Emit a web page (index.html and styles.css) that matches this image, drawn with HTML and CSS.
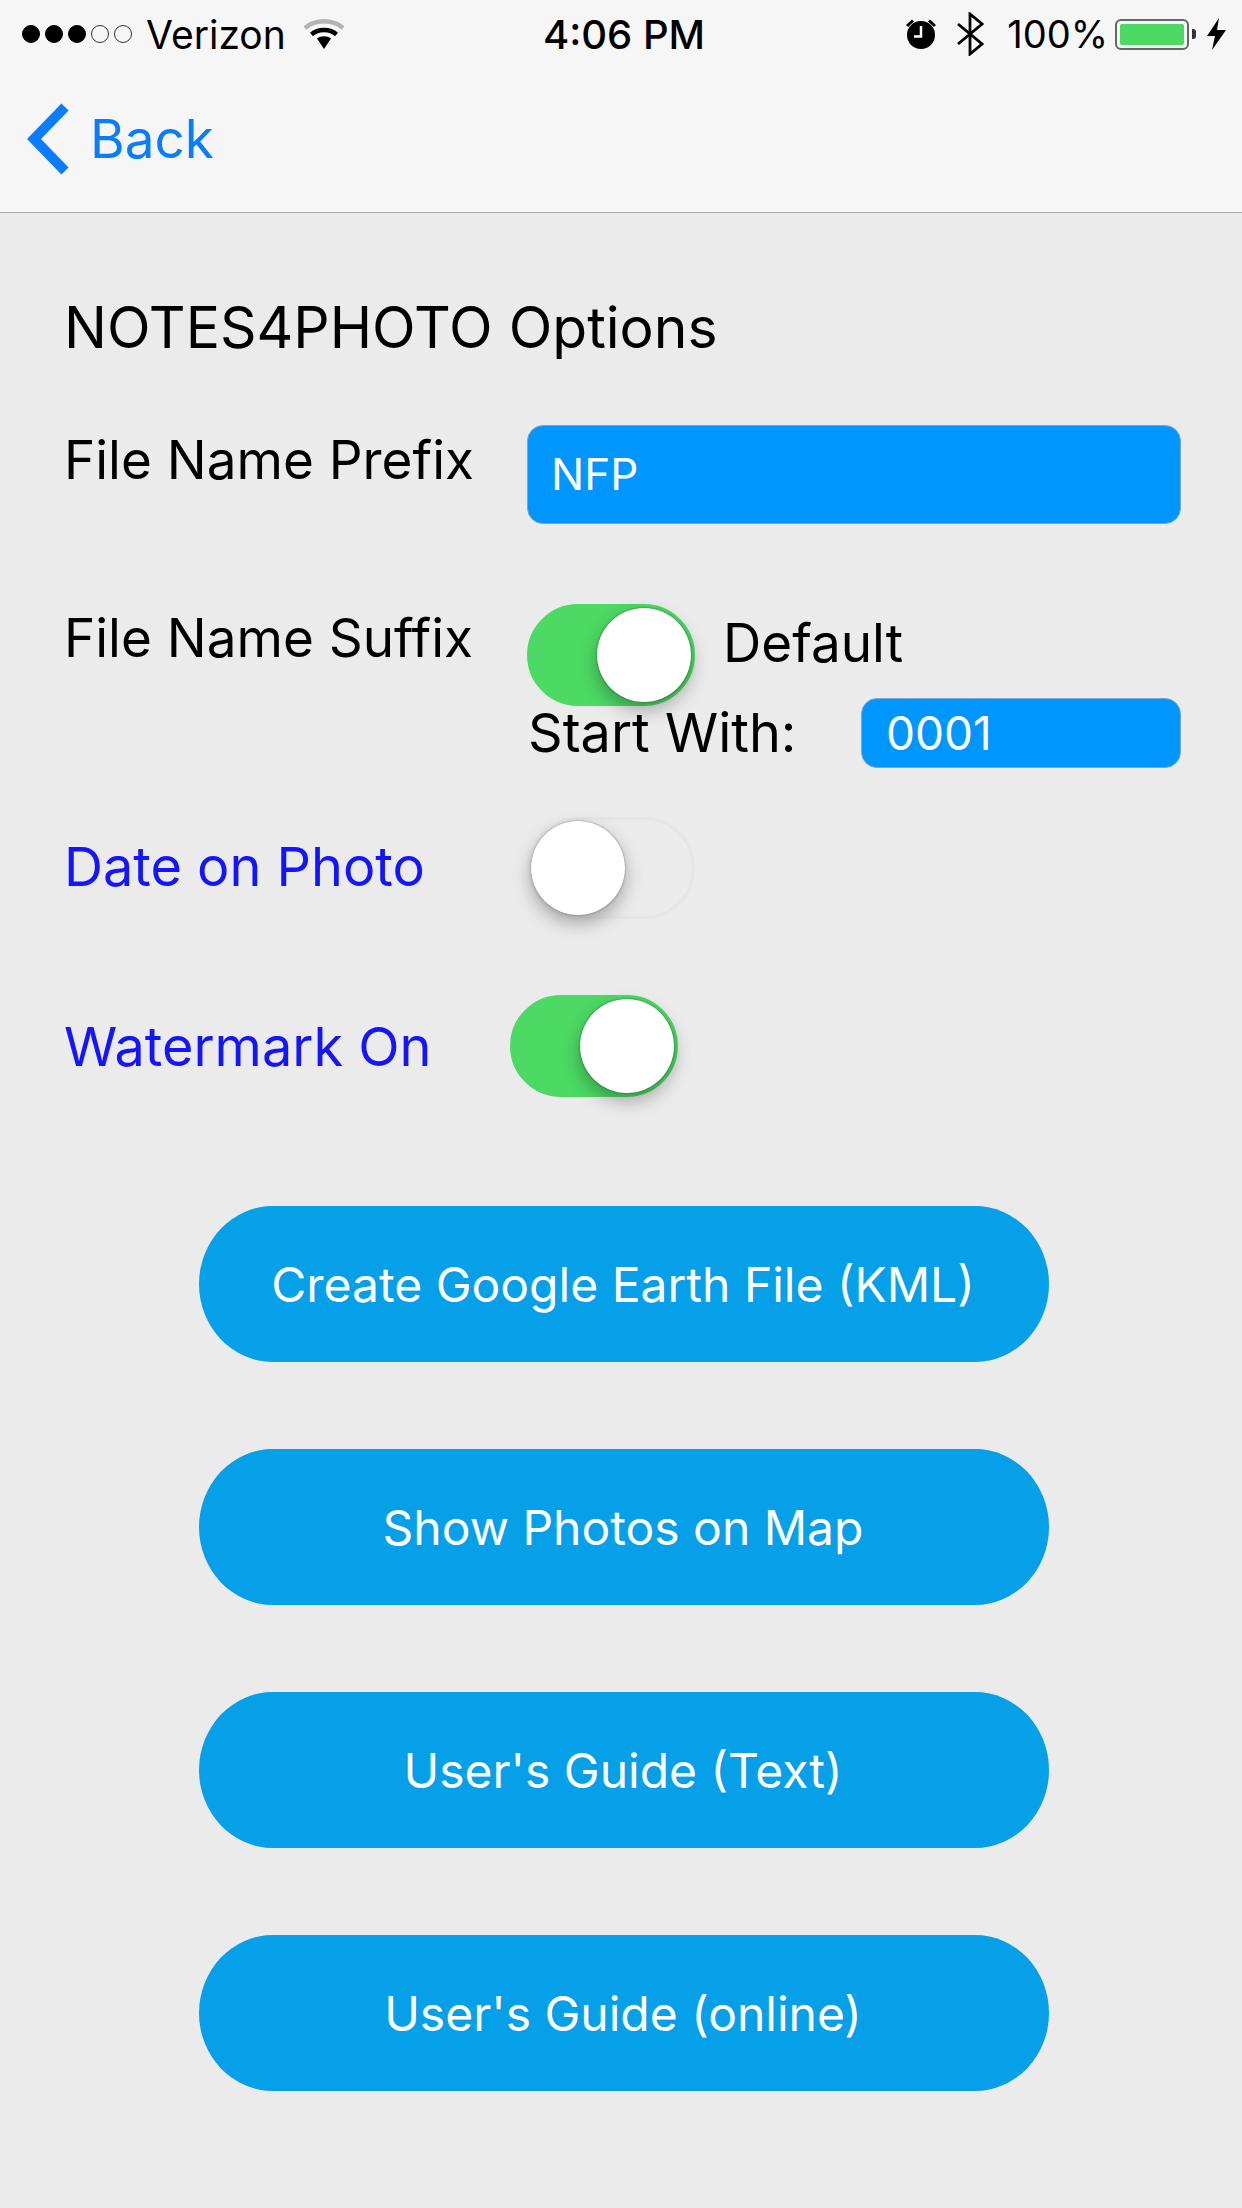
FILE: index.html
```html
<!DOCTYPE html>
<html lang="en">
<head>
    <meta charset="UTF-8">
    <meta name="viewport" content="width=device-width, initial-scale=1.0">
    <title>NOTES4PHOTO Options</title>
    <link rel="stylesheet" href="styles.css">
</head>
<body>
    <header class="topbar">
        <div class="status">
            <div class="status-left">
                <div class="signal">
                    <span class="dot on"></span><span class="dot on"></span><span class="dot on"></span><span class="dot"></span><span class="dot"></span>
                </div>
                <span class="carrier">Verizon</span>
                <svg class="wifi" width="40" height="30" viewBox="0 0 40 30">
                    <path d="M1 9C11 0 29 0 39 9" fill="none" stroke="#b4b4b4" stroke-width="4.5"/>
                    <path d="M7.5 15.5C14 9.5 26 9.5 32.5 15.5" fill="none" stroke="#000" stroke-width="4.5"/>
                    <path d="M13 19.5C17 16.5 23 16.5 27 19.5L20 30Z" fill="#000"/>
                </svg>
            </div>
            <div class="clock">4:06 PM</div>
            <div class="status-right">
                <svg class="alarm" width="32" height="32" viewBox="0 0 32 32">
                    <path d="M1 7L7 1.5L9 3.5L3 9ZM31 7L25 1.5L23 3.5L29 9Z" fill="#000"/>
                    <circle cx="16" cy="17" r="14" fill="#000"/>
                    <path d="M16 8V18.5H9" fill="none" stroke="#fff" stroke-width="2.5"/>
                </svg>
                <svg class="bt" width="27" height="44" viewBox="0 0 27 44">
                    <path d="M1 12L25 32L13 42V2L25 12L1 32" fill="none" stroke="#000" stroke-width="2.8"/>
                </svg>
                <span class="percent">100%</span>
                <div class="battery"><div class="charge"></div></div>
                <div class="nub"></div>
                <svg class="bolt" width="19" height="32" viewBox="0 0 19 32">
                    <path d="M12 0L0 18H8L5 32L19 12H10Z" fill="#000"/>
                </svg>
            </div>
        </div>
        <nav class="navbar">
            <svg class="chevron" width="44" height="72" viewBox="0 0 44 72">
                <path d="M39 4L8 36L39 68" fill="none" stroke="#0a7cff" stroke-width="10"/>
            </svg>
            <span class="back">Back</span>
        </nav>
    </header>

    <main class="content">
        <h1 class="title">NOTES4PHOTO Options</h1>

        <div class="row row-prefix">
            <label class="label">File Name Prefix</label>
            <div class="field">NFP</div>
        </div>

        <div class="row row-suffix">
            <label class="label">File Name Suffix</label>
            <div class="suffix">
                <div class="suffix-top">
                    <div class="switch on"><div class="thumb"></div></div>
                    <span class="text">Default</span>
                </div>
                <div class="suffix-bottom">
                    <span class="text">Start With:</span>
                    <div class="field small">0001</div>
                </div>
            </div>
        </div>

        <div class="row row-date">
            <label class="label link">Date on Photo</label>
            <div class="switch"><div class="thumb"></div></div>
        </div>

        <div class="row row-watermark">
            <label class="label link">Watermark On</label>
            <div class="switch on"><div class="thumb"></div></div>
        </div>

        <div class="actions">
            <button class="action">Create Google Earth File (KML)</button>
            <button class="action">Show Photos on Map</button>
            <button class="action">User's Guide (Text)</button>
            <button class="action">User's Guide (online)</button>
        </div>
    </main>
</body>
</html>
```

FILE: styles.css
```css
* {
    box-sizing: border-box;
}
body {
    margin: 0;
    height: 2208px;
    overflow: hidden;
    background: #ebebeb;
    color: #000;
    font-family: Inter, 'Liberation Sans', sans-serif;
}
.topbar {
    height: 213px;
    background: #f6f6f6;
    border-bottom: 1px solid #a8a8a8;
}
.status {
    display: grid;
    grid-template-columns: 1fr auto 1fr;
    align-items: center;
    height: 68px;
    padding: 0 16px 0 22px;
    font-size: 38px;
}
.status-left, .status-right {
    display: flex;
    align-items: center;
}
.status-right {
    justify-content: flex-end;
}
.signal {
    display: flex;
    gap: 5px;
}
.dot {
    width: 18px;
    height: 18px;
    border-radius: 50%;
    border: 1.5px solid #333;
}
.dot.on {
    background: #000;
    border-color: #000;
}
.carrier {
    margin-left: 14px;
    font-size: 39px;
}
.wifi {
    margin-left: 18px;
}
.clock {
    font-weight: 500;
    font-size: 40px;
}
.bt {
    margin-left: 20px;
}
.percent {
    margin-left: 23px;
}
.battery {
    width: 74px;
    height: 31px;
    margin-left: 7px;
    padding: 3px;
    border: 2px solid #666;
    border-radius: 6px;
}
.charge {
    height: 100%;
    background: #4cd964;
    border-radius: 2px;
}
.nub {
    width: 4px;
    height: 10px;
    margin-left: 3px;
    background: #333;
    border-radius: 0 3px 3px 0;
}
.bolt {
    margin-left: 11px;
}
.navbar {
    display: flex;
    align-items: center;
    height: 144px;
    padding: 0 0 2px 26px;
}
.back {
    margin-left: 20px;
    font-size: 53px;
    color: #0a7cff;
}
.content {
    padding: 0 0 0 64px;
}
.title {
    margin: 0;
    padding-top: 82px;
    font-size: 57px;
    font-weight: 400;
    line-height: 66px;
}
.row {
    display: flex;
    align-items: flex-start;
}
.label {
    width: 463px;
    font-size: 53px;
    line-height: 60px;
}
.link {
    color: #1414ff;
    font-size: 54px;
}
.text {
    font-size: 53px;
    line-height: 60px;
}
.suffix-top .text {
    margin-bottom: 24px;
}
.suffix-bottom .text {
    font-size: 54px;
}
.field {
    width: 654px;
    height: 99px;
    padding-left: 23px;
    background: #0096ff;
    border: 1px solid #7fa6c4;
    border-radius: 16px;
    color: #fff;
    font-size: 44px;
    line-height: 97px;
}
.field.small {
    width: 320px;
    height: 70px;
    padding-left: 24px;
    font-size: 46px;
    line-height: 68px;
    margin-left: auto;
}
.row-prefix {
    margin-top: 64px;
}
.row-prefix .label {
    padding-top: 5px;
}
.row-suffix {
    margin-top: 80px;
}
.row-suffix .label {
    padding-top: 4px;
}
.suffix {
    width: 654px;
}
.suffix-top {
    display: flex;
    align-items: center;
    gap: 28px;
}
.suffix-bottom {
    display: flex;
    align-items: center;
    margin-top: -8px;
    padding-left: 1px;
}
.switch {
    position: relative;
    width: 168px;
    height: 102px;
    border: 3px solid #e6e6e6;
    border-radius: 51px;
}
.switch.on {
    background: #4cd964;
    border-color: #4cd964;
}
.thumb {
    position: absolute;
    left: 1px;
    top: 1px;
    width: 94px;
    height: 94px;
    background: #fff;
    border-radius: 50%;
    box-shadow: 0 8px 18px rgba(0, 0, 0, 0.3), 0 0 2px rgba(0, 0, 0, 0.5);
}
.switch.on .thumb {
    left: auto;
    right: 1px;
}
.row-date {
    align-items: center;
    margin-top: 49px;
}
.row-date .label {
    padding-bottom: 3px;
}
.row-watermark {
    align-items: center;
    margin-top: 76px;
}
.row-watermark .label {
    width: 446px;
    padding-top: 2px;
}
.actions {
    display: flex;
    flex-direction: column;
    gap: 87px;
    width: 850px;
    margin: 109px 0 0 135px;
}
.action {
    height: 156px;
    padding: 0 2px 0 0;
    border: none;
    border-radius: 74px / 78px;
    background: #05a0e8;
    color: #fff;
    font-family: inherit;
    font-size: 48px;
}
```
